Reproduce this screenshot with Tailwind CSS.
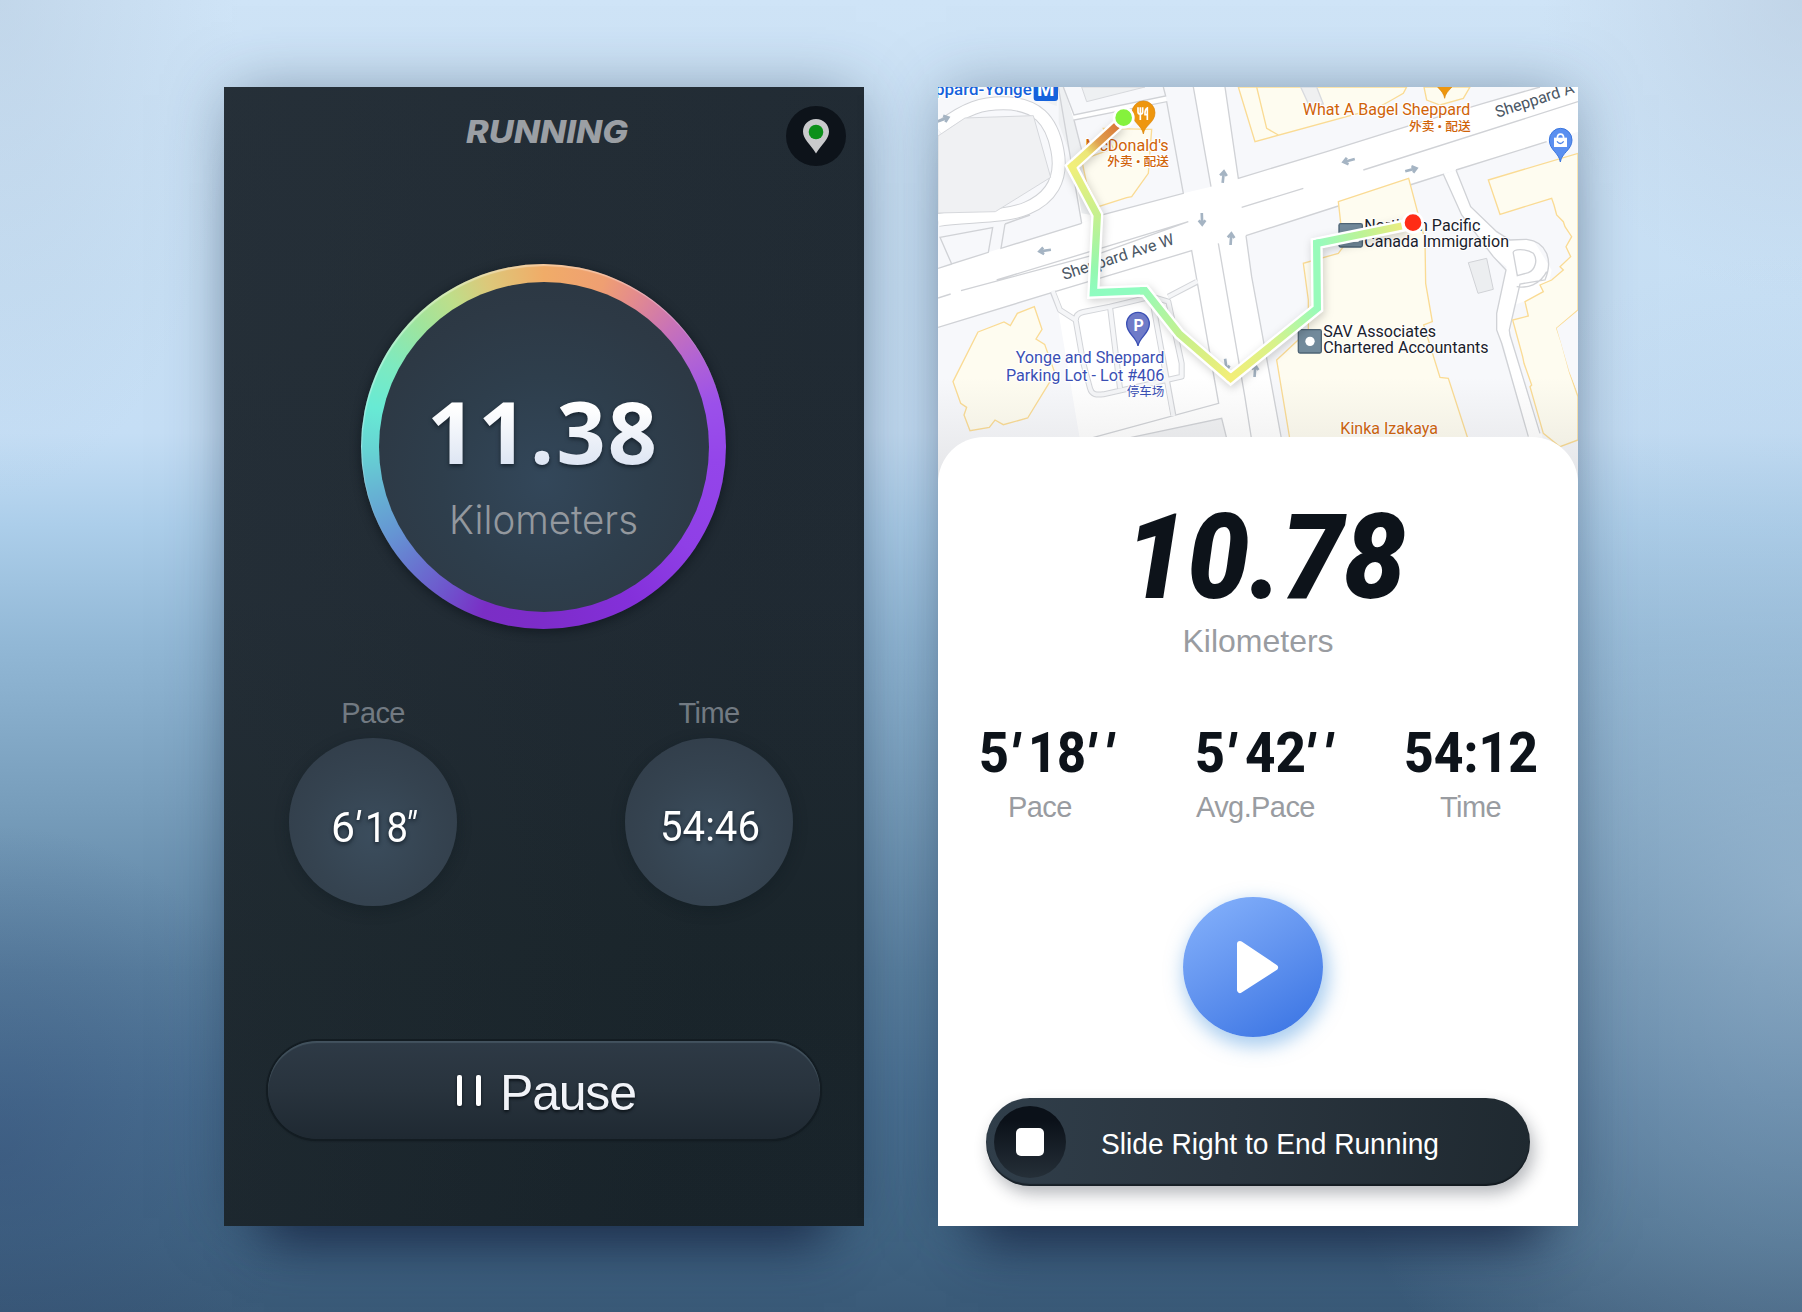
<!DOCTYPE html>
<html lang="en">
<head>
<meta charset="utf-8">
<title>Running</title>
<script src="https://cdn.jsdelivr.net/npm/@tailwindcss/browser@4"></script>
</head>
<body class="w-[1802px] h-[1312px] overflow-hidden font-['Liberation_Sans',Arial,sans-serif] bg-[radial-gradient(ellipse_300px_330px_at_0%_88%,rgba(48,72,115,0.4),transparent),radial-gradient(ellipse_520px_640px_at_100%_68%,rgba(168,196,220,0.6),transparent),radial-gradient(ellipse_240px_500px_at_0%_0%,rgba(175,195,215,0.4),transparent),radial-gradient(ellipse_260px_300px_at_100%_0%,rgba(185,203,222,0.6),transparent),linear-gradient(180deg,#cfe4f7_0%,#c7dff4_22%,#c5def5_33%,#acceea_40%,#92b8d6_49%,#769cba_62%,#5a80a0_74%,#4a7092_84%,#416584_94%,#3a5a78_100%)]">
<main class="flex items-start gap-[74px] pl-[224px] pt-[87px]">

  <!-- Dark running screen -->
  <section class="w-[640px] h-[1139px] shrink-0 flex flex-col bg-[linear-gradient(100deg,rgba(44,54,62,0.35)_0%,rgba(28,38,44,0.1)_75%),linear-gradient(180deg,#222c35_0%,#202a33_45%,#1a252b_75%,#18232a_100%)] shadow-[0_0_60px_-8px_rgba(40,62,85,0.5),0_56px_50px_-40px_rgba(22,36,66,0.9)]">
    <header class="flex justify-between h-[177px] pl-[236px] pr-[18px] pt-[19px]">
      <svg class="w-[180px] h-[50px]" viewBox="0 0 180 50"><text x="6" y="37" textLength="162" lengthAdjust="spacingAndGlyphs" font-family="Inter, sans-serif" font-weight="800" font-style="italic" font-size="31" fill="#9b9fa4">RUNNING</text></svg>
      <div class="size-[60px] rounded-full bg-[#0d131a] flex items-center justify-center">
        <svg class="w-[28px] h-[36px]" viewBox="0 0 28 36"><path d="M14 1C6.5 1 1 6.600 1 13.600C1 21 8 26 14 35.500C20 26 27 21 27 13.600C27 6.600 21.500 1 14 1Z" fill="#c9cacc"/><circle cx="14" cy="14" r="7.300" fill="#0b9019"/></svg>
      </div>
    </header>

    <div class="size-[365px] ml-[137px] rounded-full p-[17.500px] shrink-0 bg-[conic-gradient(#f0ac68_0deg,#ef9f72_20deg,#e48c8c_31deg,#c872b8_47deg,#b163d4_60deg,#9b50ea_76deg,#9445ea_95deg,#8f3fe6_125deg,#8430da_150deg,#7d2cca_180deg,#7a2ec5_200deg,#6f52cc_213deg,#6877d0_228deg,#6595d3_240deg,#66b4d3_255deg,#66d2d3_268deg,#68ead4_283deg,#7deac0_298deg,#a0e49c_315deg,#bede8a_328deg,#dcc87a_341deg,#f0ac68_360deg)] shadow-[0_2px_8px_2px_rgba(10,18,24,0.5),inset_1px_2px_1px_rgba(255,255,255,0.35)]">
      <div class="size-full rounded-full bg-[radial-gradient(circle_at_50%_60%,#33475a_0%,#2e3e4c_40%,#2d3945_68%,#2a3540_100%)]">
        <svg class="size-[330px]" viewBox="0 0 330 330">
          <defs><linearGradient id="num" x1="0" y1="0" x2="0" y2="1"><stop offset=".3" stop-color="#fff"/><stop offset=".8" stop-color="#dde5f3"/></linearGradient></defs>
          <g font-family="'Open Sans', 'Noto Sans', sans-serif" font-weight="700" font-size="86" class="drop-shadow-[0_2px_2px_rgba(15,25,35,0.8)]"><text x="48" y="182" textLength="230" lengthAdjust="spacing" fill="url(#num)">11.38</text></g>
          <text x="70" y="252" textLength="189" lengthAdjust="spacingAndGlyphs" font-family="Inter, sans-serif" font-weight="300" font-size="40" fill="#93989e">Kilometers</text>
        </svg>
      </div>
    </div>

    <div class="flex gap-[168px] pl-[65px] mt-[68px]">
      <div class="w-[168px] flex flex-col items-center">
        <div class="h-[41px] text-[29px] leading-8 tracking-[-0.6px] text-[#727a82]">Pace</div>
        <div class="size-[168px] rounded-full bg-[radial-gradient(circle_at_50%_58%,#3b4d5d_0%,#354350_50%,#303b47_100%)] shadow-[0_4px_14px_rgba(12,22,28,0.35)]">
          <svg class="size-[168px] drop-shadow-[0_2px_2px_rgba(10,20,30,0.8)]" viewBox="0 0 168 168" font-family="Roboto, sans-serif" font-size="43" fill="#fff"><text x="42" y="103.500" textLength="24" lengthAdjust="spacingAndGlyphs">6</text><text x="64" y="104" font-style="italic">'</text><text x="76" y="103.500" textLength="43" lengthAdjust="spacingAndGlyphs">18</text><text x="116" y="100" font-style="italic" font-size="36">"</text></svg>
        </div>
      </div>
      <div class="w-[168px] flex flex-col items-center">
        <div class="h-[41px] text-[29px] leading-8 tracking-[-0.6px] text-[#727a82]">Time</div>
        <div class="size-[168px] rounded-full bg-[radial-gradient(circle_at_50%_58%,#3b4d5d_0%,#354350_50%,#303b47_100%)] shadow-[0_4px_14px_rgba(12,22,28,0.35)]">
          <svg class="size-[168px] drop-shadow-[0_2px_2px_rgba(10,20,30,0.8)]" viewBox="0 0 168 168"><text x="35" y="102.500" textLength="100" lengthAdjust="spacingAndGlyphs" font-family="Roboto, sans-serif" font-size="43" fill="#fff">54:46</text></svg>
        </div>
      </div>
    </div>

    <button class="mt-[135px] ml-[44px] w-[552px] h-[98px] rounded-full flex items-center bg-[linear-gradient(180deg,#2e3a46_0%,#28333d_50%,#1f2932_100%)] shadow-[0_0_0_2px_#131c22,0_1px_2px_1px_rgba(10,16,20,0.6),inset_0_2px_1px_rgba(105,130,140,0.35)]">
      <span class="flex gap-[14px] ml-[189px]"><i class="w-[5px] h-[31px] rounded-[2px] bg-white shadow-[0_1px_3px_#0c1319]"></i><i class="w-[5px] h-[31px] rounded-[2px] bg-white shadow-[0_1px_3px_#0c1319]"></i></span>
      <span class="ml-[19px] mt-[5px] text-[50px] tracking-[-1.2px] leading-none text-[#f1f3f8] [text-shadow:0_2px_3px_#0c1319]">Pause</span>
    </button>
  </section>

  <!-- Light map screen -->
  <section class="w-[640px] h-[1139px] shrink-0 bg-white shadow-[0_0_60px_-8px_rgba(40,62,85,0.5),0_56px_50px_-40px_rgba(22,36,66,0.9)]">
    <svg class="block w-[640px] h-[396px]" viewBox="0 0 640 396">
      <defs>
        <linearGradient id="r1" gradientUnits="userSpaceOnUse" x1="560" y1="140" x2="425" y2="260"><stop offset="0" stop-color="#d97c3a"/><stop offset=".4" stop-color="#e0a050"/><stop offset=".65" stop-color="#ece678"/><stop offset="1" stop-color="#f1f07c"/></linearGradient>
        <linearGradient id="r2" gradientUnits="userSpaceOnUse" x1="425" y1="260" x2="495" y2="640"><stop offset="0" stop-color="#f1ef7a"/><stop offset=".4" stop-color="#c6f08e"/><stop offset=".8" stop-color="#96f8ae"/><stop offset="1" stop-color="#8ffcc0"/></linearGradient>
        <linearGradient id="r3" gradientUnits="userSpaceOnUse" x1="640" y1="630" x2="902" y2="895"><stop offset="0" stop-color="#97fab8"/><stop offset=".5" stop-color="#c7f08c"/><stop offset="1" stop-color="#f3ee78"/></linearGradient>
        <linearGradient id="r4" gradientUnits="userSpaceOnUse" x1="902" y1="895" x2="1162" y2="685"><stop offset="0" stop-color="#f3ee78"/><stop offset=".5" stop-color="#d8f28a"/><stop offset="1" stop-color="#98fbba"/></linearGradient>
        <linearGradient id="r5" gradientUnits="userSpaceOnUse" x1="1160" y1="490" x2="1430" y2="435"><stop offset="0" stop-color="#96fbc0"/><stop offset=".5" stop-color="#bcf396"/><stop offset="1" stop-color="#f0ec7e"/></linearGradient>
        <linearGradient id="fade" x1="0" y1="0" x2="0" y2="1"><stop offset="0" stop-color="#666" stop-opacity="0"/><stop offset="1" stop-color="#666" stop-opacity=".13"/></linearGradient>
        <path id="arrow" d="M-19 0H15M3 -10L16 0L3 10" fill="none" stroke="#a5b4c3" stroke-width="8"/>
      </defs>
      <rect width="640" height="396" fill="#f7f8fb"/>
      <g transform="translate(-8 -7) scale(.33333)">
        <!-- road surfaces -->
        <g fill="#fff">
          <path d="M24 565L213 505L455 430L505 408L760 340L843 320L790 21H885L925 295L1240 200L1660 70L1830 21H1944V155L1850 185L1578 270L1445 310L1225 378L948 467L965 590L1055 1080H450L375 635L24 742Z"/>
          <path d="M1540 283L1595 405L1690 530L1730 560L1722 600L1700 700V750L1722 800L1795 1080H1840L1740 765L1752 675L1850 640L1865 570L1810 480L1730 480L1640 400L1622 380L1578 270Z"/>
          <path d="M385 21L455 430L505 408L432 120L710 65L707 48L432 105L400 21Z"/>
        </g>
        <path d="M24 148C110 80 160 70 220 70C320 70 365 120 382 210C400 300 360 355 290 385C220 415 100 405 24 420" fill="none" stroke="#d0d2d6" stroke-width="42"/>
        <path d="M24 148C110 80 160 70 220 70C320 70 365 120 382 210C400 300 360 355 290 385C220 415 100 405 24 420" fill="none" stroke="#fff" stroke-width="36"/>
        <path d="M24 168L105 114L310 107L362 292L196 395L24 399Z" fill="#f0f1f3" stroke="#d6d8dc" stroke-width="3"/>
        <path d="M330 21L342 64L380 78L386 21ZM386 21V130L430 250L455 400L500 408L432 120L400 21Z" fill="#eef0f2"/>
        <path d="M455 21L470 65L645 21Z" fill="#eef0f2" stroke="#d6d8dc" stroke-width="3"/>
        <path d="M1615 548L1670 535L1690 628L1644 640Z" fill="#eceef0" stroke="#d0d2d6" stroke-width="3"/>
        <!-- kerbs and medians -->
        <g fill="none" stroke="#d0d2d6" stroke-width="4">
          <path d="M30 472L188 443L175 517L65 552ZM225 432L213 505L455 430M225 432L300 405M385 21L455 430M400 21L432 105L707 48L700 21M505 408L432 120L710 65L760 340ZM790 21L843 320M885 21L925 295L1190 215L1460 130L1660 70L1830 21"/>
          <path d="M24 565L65 552M200 600L775 425M93 632L510 520L775 425M24 654L62 642M24 742L375 635L785 512L866 970L480 1075M935 382L1120 325M865 490L945 953L965 1080M948 467L965 590L1055 1080M948 467L1225 378M1300 270L1944 65M1440 315L1540 283L1595 405L1690 530L1728 570L1700 700V750L1715 790L1795 1070M1578 270L1850 185M1578 270L1622 380L1700 455L1740 480L1790 478C1850 485 1870 540 1845 600L1770 612L1738 750L1740 765L1830 1060M1750 520C1745 505 1790 505 1810 520C1825 540 1815 570 1795 578L1762 587ZM1760 620C1790 625 1830 615 1850 575"/>
          <path d="M590 1075L875 1015L890 1075" fill="#f1f2f4"/>
        </g>
        <g fill="none" stroke="#d3d5d9" stroke-width="18" stroke-linejoin="round"><path d="M368 635L390 690L437 720L460 850L480 925C485 945 500 945 520 943L755 890V850L715 665L665 650L540 680L460 696Q435 702 438 722M540 680L570 925M665 650L730 1005M715 650L800 606"/></g>
        <g fill="none" stroke="#f5f6f8" stroke-width="12" stroke-linejoin="round"><path d="M368 632L390 690L437 720L460 850L480 925C485 945 500 945 520 943L755 890V850L715 665L665 650L540 680L460 696Q435 702 438 722M540 680L570 925M665 650L730 1008M715 650L803 604"/></g>
        <!-- buildings -->
        <g fill="#fefcf0" stroke="#fadb94" stroke-width="4">
          <path d="M520 145L665 148L655 280L605 350L590 353L505 380L470 310L455 240L550 205Z"/>
          <path d="M925 21L975 185L1340 85L1385 60L1420 40L1430 21ZM1482 21L1490 60L1530 75L1600 55L1620 21Z"/>
          <path d="M980 21L1010 145L1045 165" fill="none"/>
          <path d="M1112 21L1140 82L1180 72L1160 21Z" fill="#eff0f1" stroke="#d8dade"/>
          <path d="M1225 365L1436 295L1485 480L1487 610L1507 725L1481 735L1530 892L1555 895L1615 1080H1080L1040 840L1110 775L1135 755V660L1120 550L1225 520L1240 500Z"/>
          <path d="M1675 300L1944 220V690L1880 745L1895 790L1918 875L1944 950V1080L1890 1100L1840 1060L1800 920L1805 915L1782 850L1778 830L1748 720L1795 708L1785 665L1840 635L1830 615L1865 600L1900 570L1890 560L1922 530L1908 500L1925 470L1905 440L1900 425L1880 405L1872 375L1865 355L1710 403Z"/>
          <path d="M144 756L222 726L241 737L262 700L313 680L336 748L318 777L344 793L375 880L293 1014L220 1034L195 1020L178 1042L120 1052L102 1005L110 982L92 970L69 905Z"/>
        </g>
        <path d="M1880 745L1944 692V940L1918 875Z" fill="#f7f8fb"/>
        <!-- traffic arrows -->
        <use href="#arrow" transform="translate(40 118) rotate(-20)"/><use href="#arrow" transform="translate(344 512) rotate(172)"/><use href="#arrow" transform="translate(880 290) rotate(-84)"/><use href="#arrow" transform="translate(816 418) rotate(88)"/><use href="#arrow" transform="translate(903 476) rotate(-86)"/><use href="#arrow" transform="translate(1256 242) rotate(165)"/><use href="#arrow" transform="translate(1444 269) rotate(-15)"/><use href="#arrow" transform="translate(888 855) rotate(82)"/><use href="#arrow" transform="translate(975 872) rotate(-86)"/>
        <!-- place labels -->
        <g font-family="Roboto, 'Noto Sans CJK SC', sans-serif" font-size="48" stroke="#fff" stroke-width="7" stroke-linejoin="round" paint-order="stroke">
          <text x="-12" y="44" textLength="317" lengthAdjust="spacingAndGlyphs" font-weight="500" fill="#1562dc">eppard-Yonge</text>
          <g fill="#d06308">
            <text x="466" y="213" textLength="250" lengthAdjust="spacingAndGlyphs">McDonald's</text>
            <text x="532" y="259" textLength="185" lengthAdjust="spacingAndGlyphs" font-size="37" font-weight="500">外卖 • 配送</text>
            <text x="1118" y="106" textLength="503" lengthAdjust="spacingAndGlyphs">What A Bagel Sheppard</text>
            <text x="1437" y="152" textLength="185" lengthAdjust="spacingAndGlyphs" font-size="37" font-weight="500">外卖 • 配送</text>
            <text x="1231" y="1062" textLength="293" lengthAdjust="spacingAndGlyphs">Kinka Izakaya</text>
          </g>
          <g fill="#4a5664">
            <text transform="translate(402 600) rotate(-18)" textLength="350" lengthAdjust="spacingAndGlyphs">Sheppard Ave W</text>
            <text transform="translate(1702 113) rotate(-18)" textLength="245" lengthAdjust="spacingAndGlyphs">Sheppard A</text>
          </g>
          <g fill="#3a4fb4">
            <text x="257" y="850" textLength="446" lengthAdjust="spacingAndGlyphs">Yonge and Sheppard</text>
            <text x="228" y="903" textLength="475" lengthAdjust="spacingAndGlyphs">Parking Lot - Lot #406</text>
            <text x="590" y="947" textLength="113" lengthAdjust="spacingAndGlyphs" font-size="37">停车场</text>
          </g>
        </g>
        <rect x="311" y="-5" width="73" height="68" rx="9" fill="#1562dc"/><text x="347" y="49" text-anchor="middle" font-family="Roboto, sans-serif" font-weight="700" font-size="60" fill="#fff">M</text>
        <g stroke="#4e6475" stroke-width="4" fill="#728a9b"><rect x="1227" y="431" width="70" height="70" rx="5"/><rect x="1105" y="749" width="69" height="70" rx="5"/></g>
        <path d="M1242 468L1264 452L1286 468V486H1242Z" fill="#fff"/><circle cx="1140" cy="784" r="14" fill="#fff"/>
        <g font-family="Roboto, sans-serif" font-size="48" fill="#1a212b" stroke="#fff" stroke-width="6" paint-order="stroke">
          <text x="1303" y="453" textLength="348" lengthAdjust="spacingAndGlyphs">Northern Pacific</text>
          <text x="1303" y="502" textLength="434" lengthAdjust="spacingAndGlyphs">Canada Immigration</text>
          <text x="1180" y="771" textLength="338" lengthAdjust="spacingAndGlyphs">SAV Associates</text>
          <text x="1180" y="820" textLength="496" lengthAdjust="spacingAndGlyphs">Chartered Accountants</text>
        </g>
        <!-- pins -->
        <g id="food"><path d="M640 162C636 135 606 128 606 98A34.500 35 0 0 1 675 98C675 128 644 135 640 162Z" fill="#ee960e" stroke="#d98308" stroke-width="2"/><path d="M624 82V96Q624 102 631 102Q638 102 638 96V82M631 82V120M652 120V84Q644 88 645 104H652" fill="none" stroke="#fff" stroke-width="5"/></g>
        <use href="#food" transform="translate(904 -107)"/>
        <path d="M624 798C620 770 590 762 590 732A34 35 0 0 1 658 732C658 762 628 770 624 798Z" fill="#6f7bc8" stroke="#3a4fb4" stroke-width="4"/><text x="626" y="752" text-anchor="middle" font-family="Roboto, sans-serif" font-weight="700" font-size="48" fill="#fff">P</text>
        <path d="M1891 246C1887 218 1858 210 1858 180A34 35 0 0 1 1926 180C1926 210 1895 218 1891 246Z" fill="#5a8ff0" stroke="#3a75dd" stroke-width="3"/><path d="M1872 173H1911V201H1872Z" fill="#fff"/><path d="M1882 175C1882 158 1901 158 1901 175" fill="none" stroke="#fff" stroke-width="5"/><path d="M1881 184Q1891 197 1901 184" fill="none" stroke="#4a82e6" stroke-width="4"/>
        <!-- route -->
        <path d="M570 128L425 260L502 405L490 638L645 632L748 762L902 895L1162 685L1160 490L1430 435" fill="none" stroke="#fff" stroke-width="36" class="drop-shadow-[4px_8px_12px_rgba(0,0,0,0.18)]"/>
        <g fill="none" stroke-width="22">
          <path d="M565 133L425 260" stroke="url(#r1)"/><path d="M1160 490L1415 438" stroke="url(#r5)"/>
          <path d="M433 253L425 260L502 405L490 638L645 632" stroke="url(#r2)"/>
          <path d="M630 632.500L645 632L748 762L902 895" stroke="url(#r3)"/>
          <path d="M894 888L902 895L1162 685L1160 490L1172 487.500" stroke="url(#r4)"/>
        </g>
        <circle cx="581" cy="113" r="29" fill="#85f23c" stroke="#fff" stroke-width="8"/>
        <circle cx="1449" cy="428" r="29" fill="#ff2c16" stroke="#fff" stroke-width="8"/>
      </g>
      <rect y="290" width="640" height="106" fill="url(#fade)"/>
    </svg>

    <div class="relative -mt-[46px] h-[789px] rounded-t-[46px] bg-white">
      <svg class="block w-[640px] h-[178px]" viewBox="0 0 640 178"><text x="187" y="161" textLength="281" lengthAdjust="spacingAndGlyphs" font-family="Roboto, sans-serif" font-weight="900" font-style="italic" font-size="119" fill="#0d131a">10.78</text></svg>
      <div class="h-[95px] text-center text-[32px] leading-[52px] text-[#999ca1]">Kilometers</div>
      <svg class="block w-[640px] h-[70px]" viewBox="0 0 640 70" font-family="Roboto, sans-serif" font-weight="800" font-size="56" fill="#0d131a">
        <text x="41" y="62" textLength="30" lengthAdjust="spacingAndGlyphs">5</text><text x="72" y="63" font-style="italic">'</text><text x="90" y="62" textLength="58" lengthAdjust="spacingAndGlyphs">18</text><text x="148" y="63" font-style="italic">'</text><text x="166" y="63" font-style="italic">'</text>
        <text x="257" y="62" textLength="30" lengthAdjust="spacingAndGlyphs">5</text><text x="288" y="63" font-style="italic">'</text><text x="307" y="62" textLength="61" lengthAdjust="spacingAndGlyphs">42</text><text x="367" y="63" font-style="italic">'</text><text x="385" y="63" font-style="italic">'</text>
        <text x="466" y="62" textLength="134" lengthAdjust="spacingAndGlyphs">54:12</text>
      </svg>
      <div class="flex h-[117px] pt-[11px] text-[29px] leading-8 tracking-[-0.6px] text-[#999ca1]">
        <span class="ml-[70px] w-[188px]">Pace</span><span class="w-[244px]">Avg.Pace</span><span>Time</span>
      </div>
      <button class="block ml-[245px] size-[140px] rounded-full bg-[linear-gradient(150deg,#83b0fb_5%,#6596f0_45%,#3f78e5_90%)] shadow-[3px_7px_18px_3px_rgba(90,160,225,0.5)]">
        <svg class="size-[140px]" viewBox="0 0 140 140"><path d="M57 47L92 70.500L57 93Z" fill="#fff" stroke="#fff" stroke-width="6" stroke-linejoin="round"/></svg>
      </button>
      <div class="mt-[61px] ml-[48px] w-[544px] h-[88px] rounded-full flex items-center pl-[8px] bg-[linear-gradient(95deg,#303e4a_0%,#2a353f_45%,#1f2930_100%)] shadow-[4px_8px_16px_rgba(20,25,40,0.3),inset_0_-2px_1px_rgba(10,15,20,0.6)]">
        <div class="size-[72px] rounded-full bg-[linear-gradient(180deg,#0b1119_20%,#252f38_100%)] flex items-center justify-center"><i class="size-[28px] rounded-[5px] bg-white"></i></div>
        <svg class="w-[400px] h-[60px] ml-[35px]" viewBox="0 0 400 60"><text x="0" y="41.500" textLength="338" lengthAdjust="spacingAndGlyphs" font-family="Liberation Sans, sans-serif" font-size="29.500" fill="#fff">Slide Right to End Running</text></svg>
      </div>
    </div>
  </section>
</main>
</body>
</html>
